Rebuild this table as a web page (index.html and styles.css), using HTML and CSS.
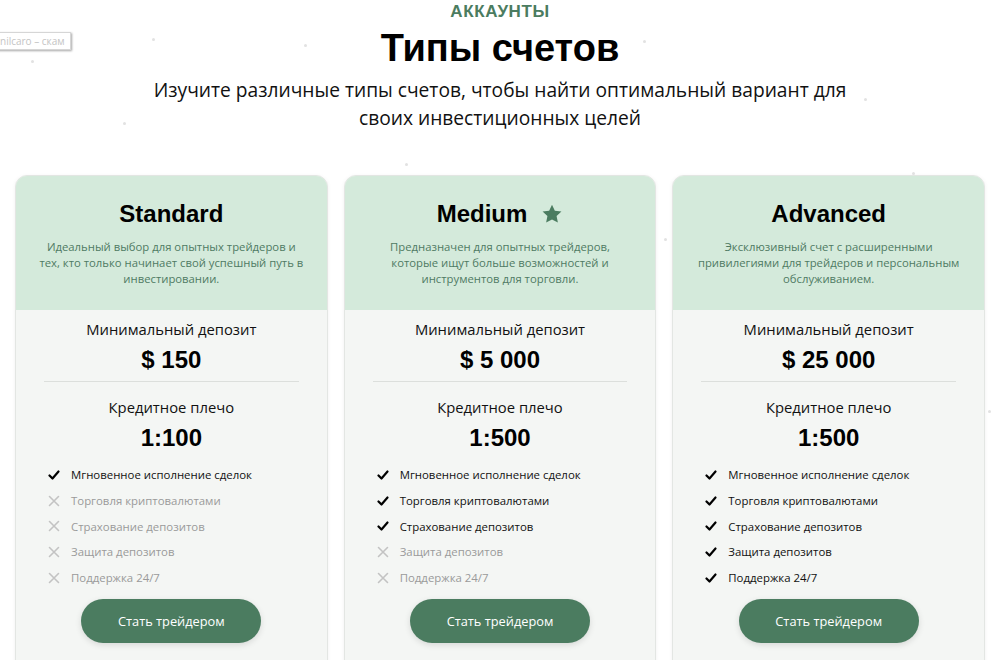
FILE: index.html
```html
<!DOCTYPE html>
<html lang="ru">
<head>
<meta charset="utf-8">
<title>Типы счетов</title>
<link rel="stylesheet" href="styles.css">
</head>
<body>
<div class="tip">nilcaro – скам</div>
<span class="dot" style="left:31px;top:60px"></span>
<span class="dot" style="left:152px;top:38px"></span>
<span class="dot" style="left:304px;top:44px"></span>
<span class="dot" style="left:123px;top:122px"></span>
<span class="dot" style="left:405px;top:163px"></span>
<span class="dot" style="left:643px;top:40px"></span>
<span class="dot" style="left:664px;top:238px"></span>
<span class="dot" style="left:912px;top:172px"></span>
<span class="dot" style="left:988px;top:410px"></span>
<span class="dot" style="left:864px;top:98px"></span>

<section class="page">
  <div class="eyebrow">АККАУНТЫ</div>
  <h1 class="title">Типы счетов</h1>
  <p class="lead">Изучите различные типы счетов, чтобы найти оптимальный вариант для своих инвестиционных целей</p>

  <div class="cards">
    <div class="card">
      <div class="card-head">
        <h2 class="card-title">Standard</h2>
        <p class="card-desc">Идеальный выбор для опытных трейдеров и тех, кто только начинает свой успешный путь в инвестировании.</p>
      </div>
      <div class="card-body">
        <div class="label">Минимальный депозит</div>
        <div class="value">$ 150</div>
        <div class="divider"></div>
        <div class="label">Кредитное плечо</div>
        <div class="value">1:100</div>
        <ul class="features">
          <li class="on"><svg class="ic" viewBox="0 0 12 12"><path d="M1.5 6.5 L4.5 9.5 L10.5 2.5" /></svg>Мгновенное исполнение сделок</li>
          <li class="off"><svg class="ic" viewBox="0 0 12 12"><path d="M1.5 1.5 L10.5 10.5 M10.5 1.5 L1.5 10.5" /></svg>Торговля криптовалютами</li>
          <li class="off"><svg class="ic" viewBox="0 0 12 12"><path d="M1.5 1.5 L10.5 10.5 M10.5 1.5 L1.5 10.5" /></svg>Страхование депозитов</li>
          <li class="off"><svg class="ic" viewBox="0 0 12 12"><path d="M1.5 1.5 L10.5 10.5 M10.5 1.5 L1.5 10.5" /></svg>Защита депозитов</li>
          <li class="off"><svg class="ic" viewBox="0 0 12 12"><path d="M1.5 1.5 L10.5 10.5 M10.5 1.5 L1.5 10.5" /></svg>Поддержка 24/7</li>
        </ul>
        <button class="btn">Стать трейдером</button>
      </div>
    </div>

    <div class="card">
      <div class="card-head">
        <h2 class="card-title">Medium <svg class="star" viewBox="0 0 24 24"><path d="M12 1.8l3.1 6.6 7.2.9-5.3 5 1.4 7.1L12 17.9l-6.4 3.5L7 14.3l-5.3-5 7.2-.9z"/></svg></h2>
        <p class="card-desc">Предназначен для опытных трейдеров, которые ищут больше возможностей и инструментов для торговли.</p>
      </div>
      <div class="card-body">
        <div class="label">Минимальный депозит</div>
        <div class="value">$ 5 000</div>
        <div class="divider"></div>
        <div class="label">Кредитное плечо</div>
        <div class="value">1:500</div>
        <ul class="features">
          <li class="on"><svg class="ic" viewBox="0 0 12 12"><path d="M1.5 6.5 L4.5 9.5 L10.5 2.5" /></svg>Мгновенное исполнение сделок</li>
          <li class="on"><svg class="ic" viewBox="0 0 12 12"><path d="M1.5 6.5 L4.5 9.5 L10.5 2.5" /></svg>Торговля криптовалютами</li>
          <li class="on"><svg class="ic" viewBox="0 0 12 12"><path d="M1.5 6.5 L4.5 9.5 L10.5 2.5" /></svg>Страхование депозитов</li>
          <li class="off"><svg class="ic" viewBox="0 0 12 12"><path d="M1.5 1.5 L10.5 10.5 M10.5 1.5 L1.5 10.5" /></svg>Защита депозитов</li>
          <li class="off"><svg class="ic" viewBox="0 0 12 12"><path d="M1.5 1.5 L10.5 10.5 M10.5 1.5 L1.5 10.5" /></svg>Поддержка 24/7</li>
        </ul>
        <button class="btn">Стать трейдером</button>
      </div>
    </div>

    <div class="card">
      <div class="card-head">
        <h2 class="card-title">Advanced</h2>
        <p class="card-desc">Эксклюзивный счет с расширенными привилегиями для трейдеров и персональным обслуживанием.</p>
      </div>
      <div class="card-body">
        <div class="label">Минимальный депозит</div>
        <div class="value">$ 25 000</div>
        <div class="divider"></div>
        <div class="label">Кредитное плечо</div>
        <div class="value">1:500</div>
        <ul class="features">
          <li class="on"><svg class="ic" viewBox="0 0 12 12"><path d="M1.5 6.5 L4.5 9.5 L10.5 2.5" /></svg>Мгновенное исполнение сделок</li>
          <li class="on"><svg class="ic" viewBox="0 0 12 12"><path d="M1.5 6.5 L4.5 9.5 L10.5 2.5" /></svg>Торговля криптовалютами</li>
          <li class="on"><svg class="ic" viewBox="0 0 12 12"><path d="M1.5 6.5 L4.5 9.5 L10.5 2.5" /></svg>Страхование депозитов</li>
          <li class="on"><svg class="ic" viewBox="0 0 12 12"><path d="M1.5 6.5 L4.5 9.5 L10.5 2.5" /></svg>Защита депозитов</li>
          <li class="on"><svg class="ic" viewBox="0 0 12 12"><path d="M1.5 6.5 L4.5 9.5 L10.5 2.5" /></svg>Поддержка 24/7</li>
        </ul>
        <button class="btn">Стать трейдером</button>
      </div>
    </div>
  </div>
</section>
</body>
</html>
```

FILE: styles.css
```css
html, body {
  margin: 0;
  padding: 0;
  background: #ffffff;
  overflow: hidden;
  height: 660px;
}
body {
  font-family: "Open Sans", "Noto Sans", sans-serif;
  color: #111;
  position: relative;
}
.dot {
  position: absolute;
  width: 3px;
  height: 3px;
  border-radius: 50%;
  background: #e2e2e2;
}
.tip {
  position: absolute;
  left: -6px;
  top: 32px;
  padding: 1px 5px;
  font-size: 10px;
  line-height: 14px;
  color: #c4c4c4;
  background: #fff;
  border: 1px solid #d6d6d6;
  box-shadow: 1px 1px 2px rgba(0,0,0,0.35);
  z-index: 5;
}
.page {
  width: 1000px;
  display: flex;
  flex-direction: column;
  align-items: center;
  padding-top: 2px;
}
.eyebrow {
  font-family: "Liberation Sans", Arial, sans-serif;
  font-weight: 700;
  font-size: 17px;
  line-height: 20px;
  color: #4b7c60;
  letter-spacing: 0.6px;
}
.title {
  margin: 4px 0 0;
  font-family: "Liberation Sans", Arial, sans-serif;
  font-weight: 700;
  font-size: 38px;
  line-height: 44px;
  color: #000;
}
.lead {
  margin: 6px 0 0;
  width: 720px;
  text-align: center;
  font-size: 19.2px;
  line-height: 28px;
  color: #111;
}
.cards {
  margin-top: 43px;
  width: 970px;
  display: grid;
  grid-template-columns: repeat(3, 1fr);
  gap: 16px;
}
.card {
  border-radius: 12px;
  overflow: hidden;
  background: #f4f6f4;
  border: 1px solid #e3e6e3;
  box-shadow: 0 1px 4px rgba(0,0,0,0.06);
  height: 500px;
}
.card-head {
  background: #d4eadb;
  height: 134px;
  padding-top: 24px;
  box-sizing: border-box;
  text-align: center;
}
.card-title {
  margin: 0;
  font-family: "Liberation Sans", Arial, sans-serif;
  font-weight: 700;
  font-size: 24px;
  line-height: 28px;
  color: #000;
  display: flex;
  justify-content: center;
  align-items: center;
  gap: 14px;
}
.star {
  width: 22px;
  height: 22px;
  fill: #4b7c60;
}
.card-desc {
  margin: 11px auto 0;
  width: 264px;
  font-size: 11.3px;
  line-height: 16px;
  color: #4f7a63;
}
.card-body {
  padding: 9px 28px 0;
  text-align: center;
}
.label {
  font-size: 14.8px;
  line-height: 20px;
  color: #111;
}
.value {
  margin-top: 8px;
  font-family: "Liberation Sans", Arial, sans-serif;
  font-weight: 700;
  font-size: 24px;
  line-height: 26px;
  color: #000;
}
.divider {
  height: 1px;
  background: #dcdfdc;
  margin: 8px 0 15px;
}
.features {
  list-style: none;
  margin: 11px 0 0;
  padding: 0 0 0 4px;
  text-align: left;
}
.features li {
  display: flex;
  align-items: center;
  gap: 11px;
  height: 25.7px;
  font-size: 11.4px;
}
.features li.on { color: #111; }
.features li.off { color: #9a9a9a; }
.ic {
  width: 12px;
  height: 12px;
  fill: none;
  stroke-linecap: round;
  stroke-linejoin: round;
}
.on .ic { stroke: #000; stroke-width: 2.2; }
.off .ic { stroke: #c3c3c3; stroke-width: 1.6; }
.btn {
  margin-top: 9px;
  width: 180px;
  height: 44px;
  border: none;
  border-radius: 22px;
  background: #4b7c60;
  color: #fff;
  font-family: "Open Sans", "Noto Sans", sans-serif;
  font-size: 12.8px;
  box-shadow: 0 2px 6px rgba(0,0,0,0.12);
}
```
